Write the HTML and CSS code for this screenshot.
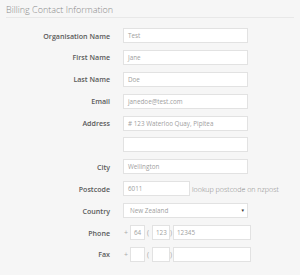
FILE: index.html
```html
<!DOCTYPE html>
<html>
<head>
<meta charset="utf-8">
<link rel="stylesheet" href="styles.css">
</head>
<body>
<div class="page">
  <h2 class="title">Billing Contact Information</h2>
  <div class="form">
    <div class="row"><label class="lbl">Organisation Name</label><div class="field"><div class="input wide">Test</div></div></div>
    <div class="row"><label class="lbl">First Name</label><div class="field"><div class="input wide">Jane</div></div></div>
    <div class="row"><label class="lbl">Last Name</label><div class="field"><div class="input wide">Doe</div></div></div>
    <div class="row"><label class="lbl">Email</label><div class="field"><div class="input wide">janedoe@test.com</div></div></div>
    <div class="row"><label class="lbl">Address</label><div class="field"><div class="input wide"># 123 Waterloo Quay, Pipitea</div></div></div>
    <div class="row"><label class="lbl"></label><div class="field"><div class="input wide"></div></div></div>
    <div class="row"><label class="lbl">City</label><div class="field"><div class="input wide">Wellington</div></div></div>
    <div class="row"><label class="lbl">Postcode</label><div class="field"><div class="input post">6011</div><span class="hint">lookup postcode on nzpost</span></div></div>
    <div class="row"><label class="lbl">Country</label><div class="field"><div class="input wide select"><span>New Zealand</span><span class="caret">&#9662;</span></div></div></div>
    <div class="row"><label class="lbl">Phone</label><div class="field"><span class="sym plus">+</span><div class="input cc">64</div><span class="sym open">(</span><div class="input area">123</div><span class="sym close">)</span><div class="input num">12345</div></div></div>
    <div class="row"><label class="lbl">Fax</label><div class="field"><span class="sym plus">+</span><div class="input cc"></div><span class="sym open">(</span><div class="input area"></div><span class="sym close">)</span><div class="input num"></div></div></div>
  </div>
</div>
</body>
</html>
```
FILE: styles.css
```css
html, body {
  margin: 0;
  padding: 0;
  background: #f6f6f6;
}
body {
  font-family: "Open Sans", "DejaVu Sans", sans-serif;
  width: 300px;
  height: 275px;
  overflow: hidden;
}
.page {
  padding: 0 0 0 6px;
}
.title {
  margin: 0;
  font-weight: 300;
  font-size: 9px;
  color: #8a8a8a;
  line-height: 13px;
  padding-top: 3px;
  height: 14px;
  border-bottom: 1px solid #e8e8e8;
  margin-right: 6px;
}
.form {
  display: flex;
  flex-direction: column;
  gap: 6.9px;
  padding-top: 10px;
}
.row {
  display: flex;
  align-items: center;
  height: 15px;
}
.lbl {
  width: 104px;
  text-align: right;
  font-size: 7.1px;
  font-weight: 600;
  color: #5a5a5a;
  padding-right: 13px;
  flex: none;
}
.field {
  display: flex;
  align-items: center;
  height: 15px;
}
.input {
  box-sizing: border-box;
  flex: none;
  height: 15px;
  background: #fff;
  border: 1px solid #e2e2e2;
  font-size: 6.3px;
  color: #a0a0a0;
  padding-left: 4px;
  line-height: 13px;
  white-space: nowrap;
  overflow: hidden;
}
.wide { width: 125px; }
.post { width: 67px; }
.hint {
  font-size: 7.1px;
  font-weight: 300;
  color: #888;
  margin-left: 2px;
  white-space: nowrap;
}
.select {
  display: flex;
  justify-content: space-between;
  padding-right: 3px;
  padding-left: 6px;
}
.caret {
  font-size: 5px;
  color: #333;
}
.sym {
  font-size: 7px;
  color: #aaa;
  flex: none;
  box-sizing: border-box;
}
.sym.plus {
  width: 7px;
  padding-left: 1px;
}
.sym.open {
  width: 7px;
  padding-left: 2px;
}
.sym.close {
  width: 3px;
}
.cc { width: 15px; padding-left: 3px; }
.area { width: 18px; padding-left: 3px; }
.num { width: 78px; padding-left: 3px; }
```
